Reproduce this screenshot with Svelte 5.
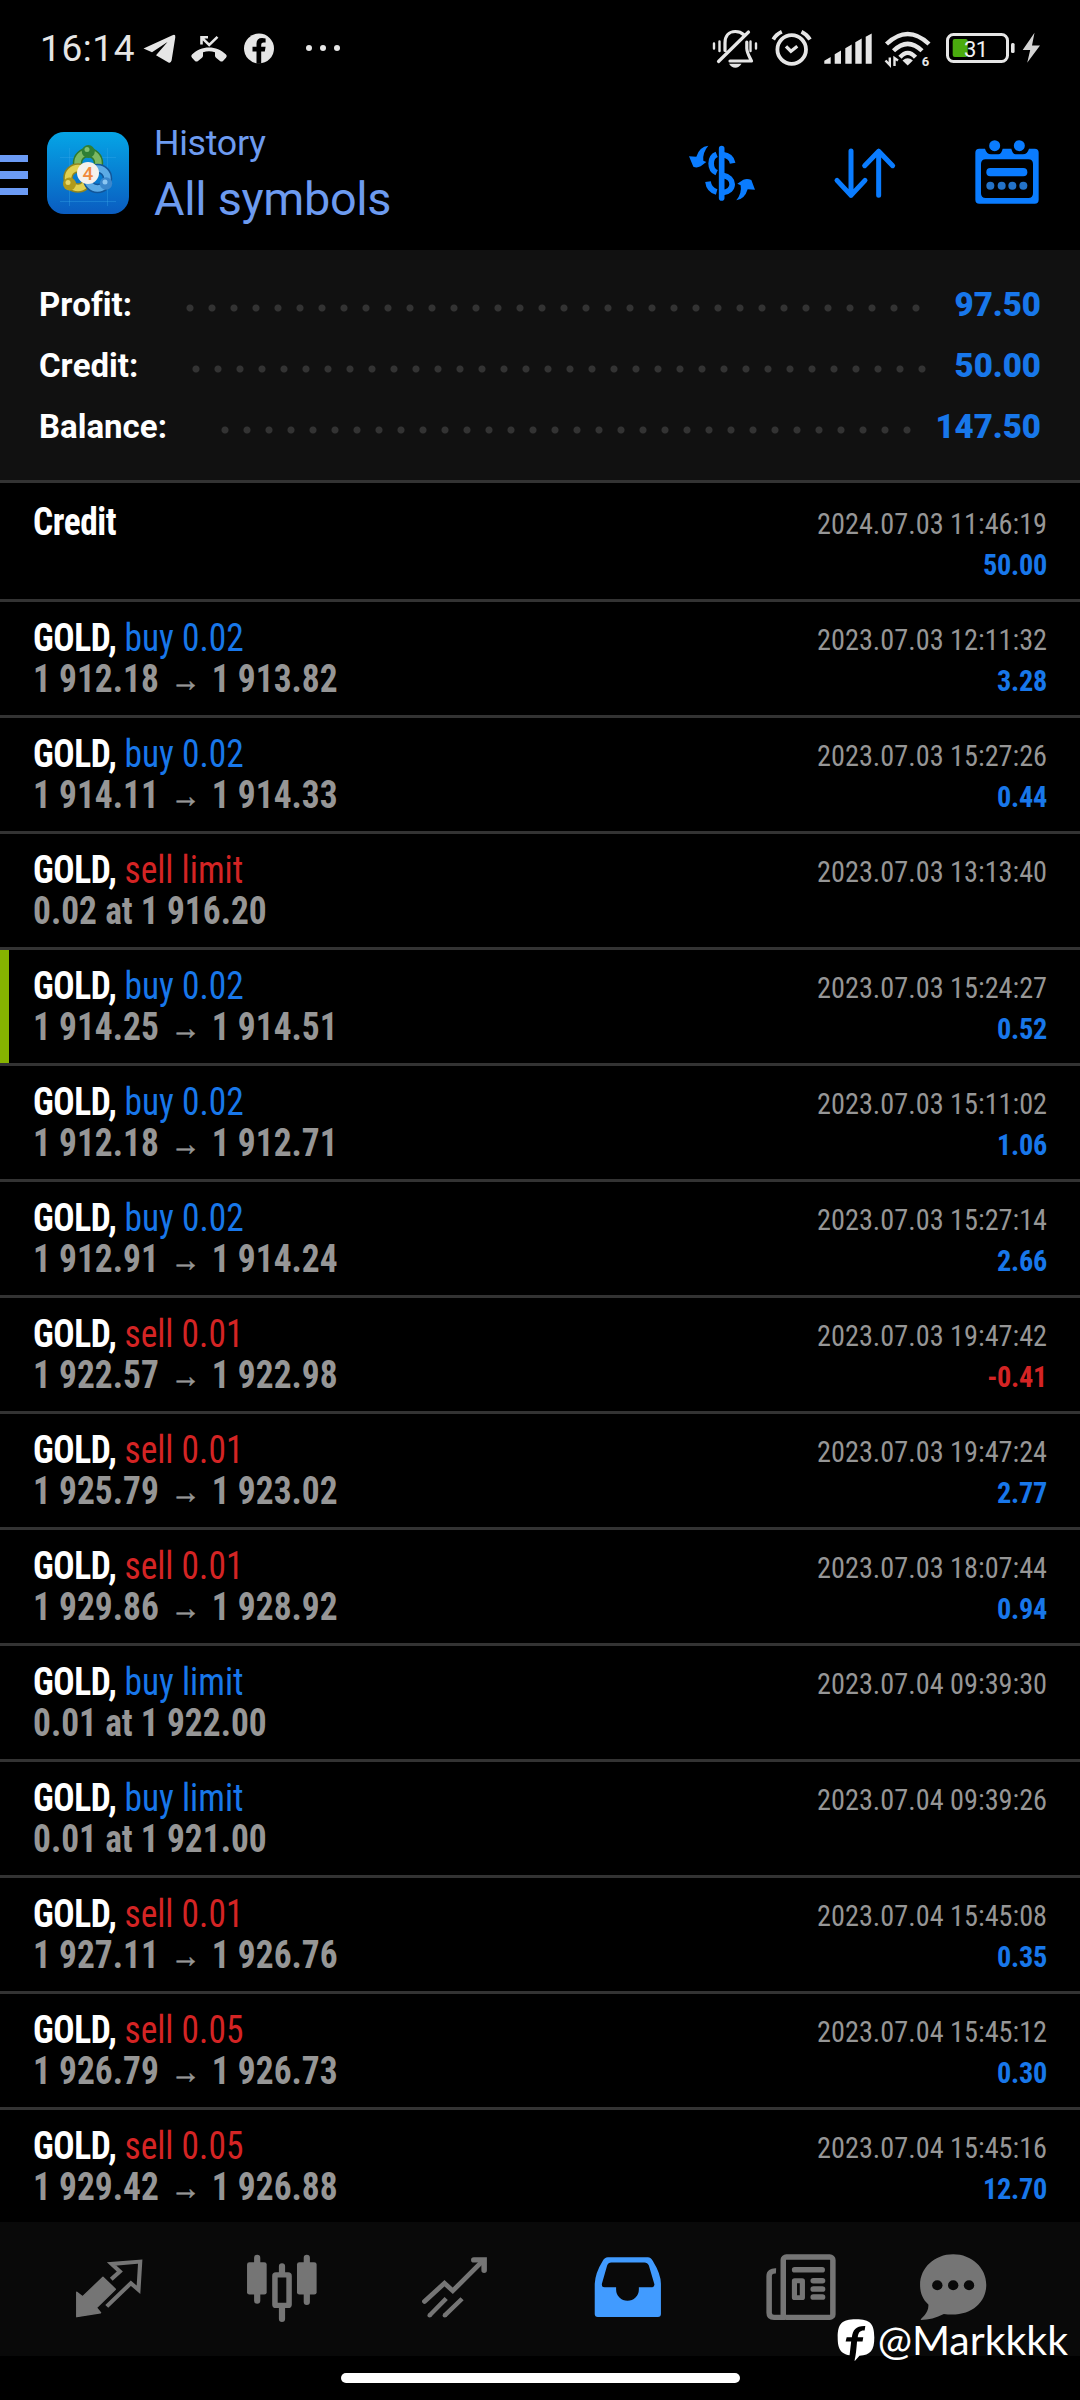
<script lang="ts">
	interface Deal {
		symbol: string;
		side?: 'buy' | 'sell';
		kind?: string;
		from?: string;
		to?: string;
		note?: string;
		time: string;
		profit?: string;
		marked?: boolean;
	}

	// Account totals; dots is the length of the leader line
	const totals = [
		{ label: 'Profit:', value: '97.50', dots: 34 },
		{ label: 'Credit:', value: '50.00', dots: 34 },
		{ label: 'Balance:', value: '147.50', dots: 32 }
	];

	const deals: Deal[] = [
		{ symbol: 'Credit', time: '2024.07.03 11:46:19', profit: '50.00' },
		{ symbol: 'GOLD', side: 'buy', kind: '0.02', from: '1 912.18', to: '1 913.82', time: '2023.07.03 12:11:32', profit: '3.28' },
		{ symbol: 'GOLD', side: 'buy', kind: '0.02', from: '1 914.11', to: '1 914.33', time: '2023.07.03 15:27:26', profit: '0.44' },
		{ symbol: 'GOLD', side: 'sell', kind: 'limit', note: '0.02 at 1 916.20', time: '2023.07.03 13:13:40' },
		{ symbol: 'GOLD', side: 'buy', kind: '0.02', from: '1 914.25', to: '1 914.51', time: '2023.07.03 15:24:27', profit: '0.52', marked: true },
		{ symbol: 'GOLD', side: 'buy', kind: '0.02', from: '1 912.18', to: '1 912.71', time: '2023.07.03 15:11:02', profit: '1.06' },
		{ symbol: 'GOLD', side: 'buy', kind: '0.02', from: '1 912.91', to: '1 914.24', time: '2023.07.03 15:27:14', profit: '2.66' },
		{ symbol: 'GOLD', side: 'sell', kind: '0.01', from: '1 922.57', to: '1 922.98', time: '2023.07.03 19:47:42', profit: '-0.41' },
		{ symbol: 'GOLD', side: 'sell', kind: '0.01', from: '1 925.79', to: '1 923.02', time: '2023.07.03 19:47:24', profit: '2.77' },
		{ symbol: 'GOLD', side: 'sell', kind: '0.01', from: '1 929.86', to: '1 928.92', time: '2023.07.03 18:07:44', profit: '0.94' },
		{ symbol: 'GOLD', side: 'buy', kind: 'limit', note: '0.01 at 1 922.00', time: '2023.07.04 09:39:30' },
		{ symbol: 'GOLD', side: 'buy', kind: 'limit', note: '0.01 at 1 921.00', time: '2023.07.04 09:39:26' },
		{ symbol: 'GOLD', side: 'sell', kind: '0.01', from: '1 927.11', to: '1 926.76', time: '2023.07.04 15:45:08', profit: '0.35' },
		{ symbol: 'GOLD', side: 'sell', kind: '0.05', from: '1 926.79', to: '1 926.73', time: '2023.07.04 15:45:12', profit: '0.30' },
		{ symbol: 'GOLD', side: 'sell', kind: '0.05', from: '1 929.42', to: '1 926.88', time: '2023.07.04 15:45:16', profit: '12.70' }
	];
</script>

<div class="screen">
	<div class="status">
		<span class="clock">16:14</span>
		<svg class="notifications" width="204" height="48" viewBox="140 24 204 48">
			<path fill="#e6e6e6" d="M143.5 48.6 172.500 35.200q3.200-1.200 2.800 2L171.600 60.600q-.8 3.200-3.600 1.600L156 55.200 167.500 42 152 52.300z" />
			<path fill="#e6e6e6" d="M192 54.500C201 45 217 45 226 54.500q1.600 1.600 0 3.200l-3 3.300q-1.500 1.200-3 0l-4-3.200q-1-.8-1-2v-3.600q-6-2-12 0v3.600q0 1.200-1 2l-4 3.200q-1.500 1.200-3 0l-3-3.300q-1.600-1.600 0-3.200z" />
			<path fill="none" stroke="#e6e6e6" stroke-width="2.600" d="M217.500 36.800 209.200 45 202 37.800M201.500 44.500V37.300H208" />
			<circle cx="259" cy="48.500" r="15" fill="#e6e6e6" />
			<path fill="#000" d="M256.500 63.800V51.500h-4v-4.700h4v-3.200q0-5.600 5.600-5.600 2 0 3.500.4v4.100h-2q-2.400 0-2.400 2.300v2h4.400l-.8 4.700h-3.600v12.300z" />
			<g fill="#e6e6e6">
				<circle cx="309" cy="48" r="3" />
				<circle cx="323" cy="48" r="3" />
				<circle cx="337" cy="48" r="3" />
			</g>
		</svg>
		<svg class="indicators" width="334" height="48" viewBox="710 24 334 48">
			<!-- muted bell -->
			<g fill="none" stroke="#e6e6e6" stroke-width="3.200" stroke-linecap="round" stroke-linejoin="round">
				<path d="M748.500 32 718.500 61.500M725 50.500V43C725 36 729 31.500 735.300 31.500 738.500 31.500 741.500 32.500 743.500 34.500M746.800 42V48.500C747 53 749.500 57 751.500 61H730" />
				<path stroke-width="2.400" d="M714 43.500v5M719.500 41.500v9.500M750.500 41.500v9.500M756 43.500v5" />
			</g>
			<path fill="#e6e6e6" d="M729 63.800h12.500q-2.500 4-6.200 4t-6.300-4z" />
			<!-- alarm -->
			<g fill="none" stroke="#e6e6e6" stroke-width="3.800">
				<circle cx="791.700" cy="49.500" r="14.300" />
				<path stroke-width="3.300" d="M786 46.300 790.900 51.200 797.300 46.300" />
				<path d="M773.300 39.500Q776 34.500 781.800 31.800M801.500 31.800Q807 34.500 810 39.500" />
			</g>
			<!-- signal -->
			<path fill="#e6e6e6" d="M824.300 63.700v-3l6.400-3.700v6.700zM834.700 63.700v-9.500l6.300-3.700v13.200zM845.300 63.700V48.200l6.400-3.700v19.200zM855.300 63.700V42.200l6.400-3.700v25.200zM865.700 63.700V36.700l6-3.200v30.200z" />
			<!-- wifi -->
			<g fill="none" stroke="#e6e6e6" stroke-width="4.400">
				<path d="M886.500 44Q907.700 24 929 44" />
				<path d="M893.500 50.800Q907.700 36.800 922 50.800" />
				<path d="M900 57.300Q907.700 48.500 915.500 57.300" />
			</g>
			<path fill="#e6e6e6" d="M902.500 60.500q5.200-4.500 10.400 0l-5.200 5z" />
			<path fill="none" stroke="#e6e6e6" stroke-width="2.400" d="M885.500 60.500 889.800 65V57.500M898 60.500 894.500 58V66" />
			<text x="921.700" y="66" font-size="13" font-weight="700" fill="#e6e6e6">6</text>
			<!-- battery -->
			<rect x="947.500" y="34.500" width="60" height="27" rx="6" fill="none" stroke="#e6e6e6" stroke-width="3" />
			<rect x="952.700" y="39" width="15" height="18" rx="2" fill="#4aab0e" />
			<rect x="1011" y="43" width="3.600" height="10" rx="1.500" fill="#e6e6e6" />
			<text x="964" y="56.600" font-size="22" fill="#f2f2f2" textLength="24">31</text>
			<path fill="#d4d4d4" d="M1034.500 32.700 1022.700 50h7.500l-3 12.700L1040 45.500h-8z" />
		</svg>
	</div>

	<header>
		<div class="burger"><i></i><i></i><i></i></div>
		<svg class="logo" width="82" height="82" viewBox="47 132 82 82">
			<defs>
				<linearGradient id="tile" x1="0" y1="0" x2="0" y2="1">
					<stop offset="0" stop-color="#05a5e6" />
					<stop offset="1" stop-color="#0a5cc0" />
				</linearGradient>
			</defs>
			<rect x="47" y="132" width="82" height="82" rx="17" fill="url(#tile)" />
			<path fill="none" stroke="#3aa9e8" stroke-opacity=".35" d="M60 157.500h56M60 201.500h56M69.500 148v58M107.500 148v58" />
			<g fill="none">
				<circle cx="88" cy="163" r="10.500" stroke="#2f7a2c" stroke-width="9.500" />
				<circle cx="88" cy="163" r="10.500" stroke="#7cb862" stroke-width="6.500" />
				<circle cx="78" cy="178" r="10" stroke="#8f8420" stroke-width="9.500" />
				<circle cx="78" cy="178" r="10" stroke="#e0d050" stroke-width="6.500" />
				<circle cx="97.500" cy="178.500" r="10" stroke="#12569a" stroke-width="9.500" />
				<circle cx="97.500" cy="178.500" r="10" stroke="#5cabe6" stroke-width="6.500" />
			</g>
			<circle cx="88.300" cy="151.500" r="6.500" fill="#2f7f35" />
			<circle cx="87" cy="149.500" r="2.500" fill="#7cbf73" />
			<circle cx="69.500" cy="184" r="6.500" fill="#b09a1c" />
			<circle cx="68" cy="182.500" r="2.500" fill="#e6d768" />
			<circle cx="106" cy="183.500" r="6.200" fill="#3b87cc" />
			<circle cx="105" cy="182" r="2.500" fill="#8cc6f2" />
			<circle cx="88" cy="173" r="11" fill="#f5f1ec" />
			<text x="88" y="180" font-size="19" font-weight="500" text-anchor="middle" fill="#f08a3c">4</text>
		</svg>
		<div class="title">
			<span class="section">History</span>
			<span class="filter">All symbols</span>
		</div>
		<svg class="currency" width="68" height="60" viewBox="24 429 204 180">
			<g fill="none" stroke="#0a7cff" stroke-width="17">
				<path d="M125 446V594" stroke-linecap="round" />
				<path d="M110 463C88 472 88 508 110 518M128 464C146 466 155 474 158 490M128 526C166 532 166 574 128 578M84 545C86 562 95 572 110 576" />
			</g>
			<path fill="#0a7cff" d="M85 437Q58 440 49 470L27 469 40 500Q50 505 62 499L79 486 70 482Q67 458 85 437z" />
			<path fill="#0a7cff" d="M169 601Q194 598 203 568L225 569 214 540Q202 534 190 539L172 551 182 556Q186 580 169 601z" />
		</svg>
		<svg class="sort" width="64" height="54" viewBox="460 438 192 162">
			<path fill="none" stroke="#0a7cff" stroke-width="15" stroke-linecap="round" stroke-linejoin="round" d="M514 453V586M472 541 514 586 556 541M597 586V454M555 497 597 454 639 497" />
		</svg>
		<svg class="calendar" width="66" height="66" viewBox="881 416 198 198">
			<path fill="#0a7cff" fill-rule="evenodd" d="M897 445H914Q919 462 932 462H954Q963 462 967 445H993Q997 462 1006 462H1028Q1041 462 1046 445H1063Q1075 445 1075 457V598Q1075 610 1063 610H897Q885 610 885 598V457Q885 445 897 445zM916 477Q902 477 902 491V579Q902 593 916 593H1044Q1058 593 1058 579V491Q1058 477 1044 477z" />
			<circle cx="943" cy="436" r="16.500" fill="#0a7cff" />
			<circle cx="1017" cy="436" r="16.500" fill="#0a7cff" />
			<rect x="918" y="503" width="123" height="25" rx="12" fill="#0a7cff" />
			<g fill="#2473c8">
				<circle cx="930" cy="556" r="12" />
				<circle cx="964" cy="556" r="12" />
				<circle cx="996" cy="556" r="12" />
				<circle cx="1029" cy="556" r="12" />
			</g>
		</svg>
	</header>

	<section class="totals">
		{#each totals as row}
			<div class="total">
				<span>{row.label}</span>
				<i class="leader" style="width: {row.dots * 22}px"></i>
				<b>{row.value}</b>
			</div>
		{/each}
	</section>

	<main>
		{#each deals as deal}
			<div class="deal" class:marked={deal.marked}>
				<div class="info">
					<div>
						<b>{deal.symbol}{deal.side ? ',' : ''}</b>
						{#if deal.side}<span class={deal.side}>{deal.side} {deal.kind}</span>{/if}
					</div>
					{#if deal.from}
						<div class="price">{deal.from}<span class="arrow">→</span>{deal.to}</div>
					{:else if deal.note}
						<div class="price">{deal.note}</div>
					{/if}
				</div>
				<div class="result">
					<div>{deal.time}</div>
					{#if deal.profit}
						<div class="profit" class:loss={deal.profit.startsWith('-')}>{deal.profit}</div>
					{/if}
				</div>
			</div>
		{/each}
	</main>

	<nav>
		<div class="tab">
			<svg width="70" height="73" viewBox="213 155 203 220" preserveAspectRatio="none">
				<path fill="#757575" stroke="#757575" stroke-width="4" stroke-linejoin="round" d="M297 231 333 267 278 323 290 338 221 350V276L238 290z" />
				<path fill="none" stroke="#757575" stroke-width="12" d="M321 237 346 214 322 191 405 184 400 269 378 249 308 319" />
			</svg>
		</div>
		<div class="tab">
			<svg width="72" height="73" viewBox="712 155 209 220" preserveAspectRatio="none">
				<path stroke="#757575" stroke-width="18" stroke-linecap="round" d="M744.500 172V302M888.500 172V306M816.500 198V230M816.500 310V357" />
				<rect x="715" y="186" width="57" height="97" rx="7" fill="#757575" />
				<rect x="860" y="186" width="57" height="97" rx="7" fill="#757575" />
				<rect x="796" y="224" width="41" height="92" rx="3" fill="#090909" stroke="#757575" stroke-width="16" />
			</svg>
		</div>
		<div class="tab">
			<svg width="70" height="73" viewBox="1218 155 203 220" preserveAspectRatio="none">
				<g fill="none" stroke="#757575" stroke-width="14" stroke-linecap="round">
					<path d="M1231 304 1289 249 1313 272 1400 182" />
					<path stroke-width="16" d="M1374 179H1404V210" />
				</g>
				<path fill="none" stroke="#757575" stroke-width="13" d="M1246 346 1294 295M1290 346 1340 296" />
				<circle cx="1246" cy="346" r="6.500" fill="#757575" />
				<circle cx="1290" cy="346" r="6.500" fill="#757575" />
			</svg>
		</div>
		<div class="tab">
			<svg width="70" height="73" viewBox="153 155 203 220" preserveAspectRatio="none">
				<path fill="#419bff" fill-rule="evenodd" d="M196 171H312Q321 171 327 183 350 222 350 251V342Q350 351 341 351H167Q158 351 158 342V251Q159 219 181 182 187 171 196 171zM206 187Q197 187 194 196L179 250Q177 261 187 261H220V268A33 34 0 0 0 286 268V261H324Q332 261 331 252L315 196Q311 187 302 187z" />
			</svg>
		</div>
		<div class="tab">
			<svg width="72" height="73" viewBox="653 155 209 220" preserveAspectRatio="none">
				<g fill="none" stroke="#757575" stroke-width="16">
					<rect x="706" y="170" width="144" height="182" rx="9" />
					<path d="M685 212Q665 211 665 228V338Q665 352 679 352H712" />
				</g>
				<g fill="#757575">
					<rect x="731" y="200" width="96" height="17" rx="8" />
					<path fill-rule="evenodd" d="M739 234H761Q769 234 769 242V292Q769 300 761 300H739Q731 300 731 292V242Q731 234 739 234zM746 249V285H754V249z" />
					<rect x="785" y="233" width="43" height="17" rx="8" />
					<rect x="785" y="258" width="43" height="17" rx="8" />
					<rect x="785" y="282" width="43" height="17" rx="8" />
				</g>
			</svg>
		</div>
		<div class="tab chat">
			<svg width="70" height="73" viewBox="1097 155 203 220" preserveAspectRatio="none">
				<path fill="#757575" d="M1199 162C1253 162 1295 203 1295 254 1295 310 1247 353 1172 342 1150 354 1128 360 1105 360 1103 356 1130 340 1127 313 1111 298 1103 279 1103 254 1103 203 1145 162 1199 162z" />
				<g fill="#090909">
					<circle cx="1153" cy="255" r="15" />
					<circle cx="1199" cy="255" r="15" />
					<circle cx="1245" cy="255" r="15" />
				</g>
			</svg>
		</div>
	</nav>

	<div class="handle"></div>

	<div class="watermark">
		<svg width="38" height="44" viewBox="865 360 110 133" preserveAspectRatio="none">
			<path fill="#fff" d="M920 364C962 364 973 378 973 419 973 458 962 472 930 474L916 491 914 474C878 472 867 458 867 419 867 378 878 364 920 364z" />
			<path fill="#000" d="M901 476 906 431H890L893 418H908C911 396 920 383 947 384L945 398C932 397 927 403 925 418H941L939 431H923C921 455 920 472 915 492L914 475z" />
		</svg>
		<span>@Markkkk</span>
	</div>
</div>

<style>
	:global(body) {
		background: #000;
	}

	.screen {
		position: relative;
		display: flex;
		flex-direction: column;
		width: 1080px;
		height: 2400px;
		overflow: hidden;
		background: #000;
		color: #fff;
		font-family: Roboto, 'Liberation Sans', sans-serif;
	}

	svg {
		display: block;
		flex: none;
	}

	.status {
		display: flex;
		align-items: center;
		height: 96px;
		padding: 0 36px 0 40px;
		box-sizing: border-box;
	}

	.clock {
		width: 100px;
		font-size: 37px;
		letter-spacing: 0.6px;
		color: #e6e6e6;
	}

	.indicators {
		margin-left: auto;
	}

	header {
		display: flex;
		align-items: center;
		height: 154px;
	}

	.burger {
		display: flex;
		flex-direction: column;
		gap: 9px;
		width: 28px;
		margin-top: 4px;
	}

	.burger i {
		height: 7.5px;
		background: #6b9bf5;
	}

	.logo {
		margin-left: 19px;
	}

	.title {
		display: flex;
		flex-direction: column;
		width: 300px;
		margin: 2px 0 0 25px;
		color: #6d9bf0;
		letter-spacing: -0.3px;
	}

	.section {
		font-size: 35.75px;
		line-height: 50px;
	}

	.filter {
		font-size: 46.75px;
		line-height: 62px;
	}

	.currency {
		margin-left: 234px;
	}

	.sort {
		margin-left: 77px;
	}

	.calendar {
		margin-left: 77px;
		margin-top: -3px;
	}

	.totals {
		height: 230px;
		padding: 24px 39px 0;
		box-sizing: border-box;
		background: #111;
		flex: none;
	}

	.total {
		display: flex;
		align-items: center;
		height: 61px;
		font-size: 33px;
		font-weight: 700;
	}

	.total span {
		font-kerning: none;
		font-variant-ligatures: none;
	}

	.leader {
		height: 8px;
		margin: 7px 0 0 47px;
		background: radial-gradient(circle, #333 3px, transparent 4px) 0 0 / 22px 8px;
	}

	.total b {
		margin-left: auto;
		color: #1877ea;
	}

	main {
		height: 1742px;
		padding-top: 3px;
		border-top: 3px solid #333;
		box-sizing: border-box;
		overflow: hidden;
		flex: none;
		font-family: 'Roboto Condensed', Roboto, 'Liberation Sans Narrow', sans-serif;
		font-stretch: 75%;
	}

	.deal {
		display: flex;
		justify-content: space-between;
		height: 116px;
		padding: 15px 32.5px 0;
		border-bottom: 3px solid #333;
		box-sizing: border-box;
		font-size: 38.5px;
		line-height: 41px;
		white-space: nowrap;
	}

	.deal.marked {
		padding-left: 23.5px;
		border-left: 9px solid #86b300;
		border-image: linear-gradient(to bottom, #86b300 113px, #333 113px) 0 0 3 9;
	}

	/* extra narrow lettering */
	.info {
		transform: scaleX(0.92);
		transform-origin: left;
	}

	.info b {
		letter-spacing: -0.5px;
	}

	.buy {
		color: #1877ea;
	}

	.sell {
		color: #d42424;
	}

	.price {
		font-weight: 700;
		color: #969696;
	}

	.arrow {
		position: relative;
		top: -1px;
		display: inline-block;
		width: 57.5px;
		text-align: center;
		font-family: 'Noto Sans', sans-serif;
		font-size: 33px;
		font-weight: 400;
		-webkit-text-stroke: 0.5px #969696;
	}

	.result {
		padding-top: 2px;
		font-size: 30.25px;
		text-align: right;
		color: #969696;
		transform: scaleX(0.935);
		transform-origin: right;
	}

	.profit {
		font-weight: 700;
		letter-spacing: -0.3px;
		color: #1877ea;
	}

	.profit.loss {
		color: #d42424;
	}

	nav {
		display: flex;
		align-items: center;
		height: 134px;
		padding: 0 0 2px 22px;
		box-sizing: border-box;
		background: #090909;
		flex: none;
	}

	.tab {
		display: flex;
		justify-content: center;
		width: 173px;
	}

	.tab.chat {
		width: 132px;
	}

	.handle {
		width: 399px;
		height: 10px;
		margin: 17px auto 0;
		border-radius: 5px;
		background: #fff;
	}

	.watermark {
		position: absolute;
		right: 12px;
		bottom: 36px;
		display: flex;
		align-items: center;
		gap: 3px;
		font-family: Lato, sans-serif;
		font-size: 41px;
	}
</style>
